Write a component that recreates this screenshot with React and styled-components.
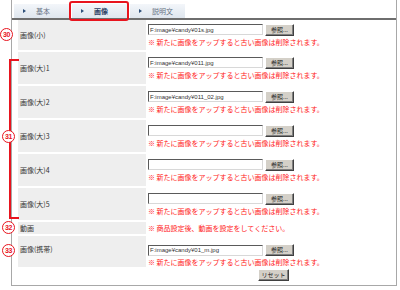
import React from "react";
import styled, { createGlobalStyle } from "styled-components";

const GlobalStyle = createGlobalStyle`
  body {
    margin: 0;
    background: #fff;
    font-family: "Noto Sans CJK JP", "Noto Sans", sans-serif;
  }
`;

const NOTE = "※ 新たに画像をアップすると古い画像は削除されます。";

const rows = [
  { label: "画像(小)", file: "F:image¥candy¥01s.jpg", h: 30 },
  { label: "画像(大)1", file: "F:image¥candy¥011.jpg", h: 32 },
  { label: "画像(大)2", file: "F:image¥candy¥011_02.jpg", h: 32 },
  { label: "画像(大)3", file: "", h: 32 },
  { label: "画像(大)4", file: "", h: 32 },
  { label: "画像(大)5", file: "", h: 32 },
  { label: "動画", note: "※ 商品設定後、動画を設定をしてください。", h: 12 },
  { label: "画像(携帯)", file: "F:image¥candy¥01_m.jpg", h: 31, bottom: true },
];

const App = () => {
  return (
    <Page>
      <GlobalStyle />
      <Frame>
        <TabBar>
          <Tab>
            <Arrow />
            <TabText>基本</TabText>
          </Tab>
          <Tab active>
            <Arrow />
            <TabText active>画像</TabText>
          </Tab>
          <Tab>
            <Arrow />
            <TabText>説明文</TabText>
          </Tab>
        </TabBar>
        <Table>
          {rows.map((r) => (
            <Row key={r.label} h={r.h}>
              <Label bottom={r.bottom}>{r.label}</Label>
              <Value bottom={r.bottom}>
                {r.note ? (
                  <Note>{r.note}</Note>
                ) : (
                  <>
                    <FileLine>
                      <FileInput readOnly value={r.file} />
                      <Browse type="button">参照...</Browse>
                    </FileLine>
                    <Note>{NOTE}</Note>
                  </>
                )}
              </Value>
            </Row>
          ))}
        </Table>
        <Footer>
          <Browse type="button" wide>
            リセット
          </Browse>
        </Footer>
      </Frame>

      <Marker style={{ left: 0, top: 28 }}>30</Marker>
      <Bracket />
      <Marker style={{ left: 2, top: 130 }}>31</Marker>
      <Marker style={{ left: 2, top: 221 }}>32</Marker>
      <Marker style={{ left: 2, top: 244 }}>33</Marker>
    </Page>
  );
};

const Page = styled.div`
  position: relative;
  width: 400px;
  height: 290px;
  overflow: hidden;
`;

const Frame = styled.div`
  box-sizing: border-box;
  margin-left: 11px;
  width: 386px;
  height: 286px;
  border: 1px solid #a8a8a8;
  border-top: none;
  display: flex;
  flex-direction: column;
`;

const TabBar = styled.div`
  display: flex;
  gap: 3px;
  padding: 4px 0 0 2px;
  height: 14px;
  border-bottom: 2px solid #6e6e6e;
`;

const Tab = styled.div`
  position: relative;
  width: 55px;
  height: 14px;
  display: flex;
  align-items: center;
  padding-left: 9px;
  box-sizing: border-box;
  background: linear-gradient(#f3f6fa, #dfe6ee);
  ${({ active }) =>
    active &&
    `
    &::after {
      content: "";
      position: absolute;
      left: -3px;
      top: -3px;
      right: -2px;
      bottom: -3px;
      border: 2px solid #e8141e;
      border-radius: 3px;
    }
  `}
`;

const Arrow = styled.span`
  width: 0;
  height: 0;
  border-top: 2px solid transparent;
  border-bottom: 2px solid transparent;
  border-left: 3px solid #2d4f7a;
`;

const TabText = styled.span`
  margin-left: 10px;
  font-size: 7px;
  color: ${({ active }) => (active ? "#2a3c62" : "#6a7586")};
  font-weight: ${({ active }) => (active ? 700 : 400)};
`;

const Table = styled.div`
  display: flex;
  flex-direction: column;
  gap: 2px;
  padding-left: 6px;
`;

const Row = styled.div`
  display: grid;
  grid-template-columns: 128px 1fr;
  min-height: ${({ h }) => h}px;
`;

const Label = styled.div`
  background: #eeeeee;
  display: flex;
  align-items: center;
  padding-left: 2px;
  padding-bottom: ${({ bottom }) => (bottom ? 6 : 0)}px;
  font-size: 7px;
  color: #333;
`;

const Value = styled.div`
  display: flex;
  flex-direction: column;
  justify-content: ${({ bottom }) => (bottom ? "flex-end" : "center")};
  gap: 2px;
  padding-left: 2px;
`;

const FileLine = styled.div`
  display: flex;
  align-items: center;
  gap: 2px;
`;

const FileInput = styled.input`
  box-sizing: border-box;
  width: 115px;
  height: 11px;
  margin: 0;
  padding: 0 1px;
  border: 1px solid;
  border-color: #5a5a5a #d8d8d8 #d8d8d8 #5a5a5a;
  font-family: "Liberation Sans", sans-serif;
  font-size: 6px;
  line-height: 8px;
  color: #333;
  background: #fff;
  outline: none;
`;

const Browse = styled.button`
  box-sizing: border-box;
  width: ${({ wide }) => (wide ? 31 : 29)}px;
  height: 12px;
  margin: 0;
  padding: 0;
  background: #d4d0c8;
  border: 1px solid;
  border-color: #fff #404040 #404040 #fff;
  box-shadow: inset -1px -1px 0 #808080;
  font-family: "Noto Sans CJK JP", sans-serif;
  font-size: 6px;
  line-height: 10px;
  color: #222;
`;

const Note = styled.div`
  font-size: 7px;
  line-height: 9px;
  color: #ff1a1a;
  white-space: nowrap;
`;

const Footer = styled.div`
  display: flex;
  padding: 2px 0 0 246px;
`;

const Marker = styled.div`
  position: absolute;
  box-sizing: border-box;
  width: 13px;
  height: 13px;
  border-radius: 50%;
  border: 1.5px solid #e8141e;
  background: #fff;
  color: #e8141e;
  font-family: "Liberation Sans", sans-serif;
  font-weight: 700;
  font-size: 7px;
  letter-spacing: -0.4px;
  display: flex;
  align-items: center;
  justify-content: center;
`;

const Bracket = styled.div`
  position: absolute;
  left: 9px;
  top: 59px;
  width: 8px;
  height: 156px;
  border: 2px solid #e8141e;
  border-right: none;
`;

export default App;
